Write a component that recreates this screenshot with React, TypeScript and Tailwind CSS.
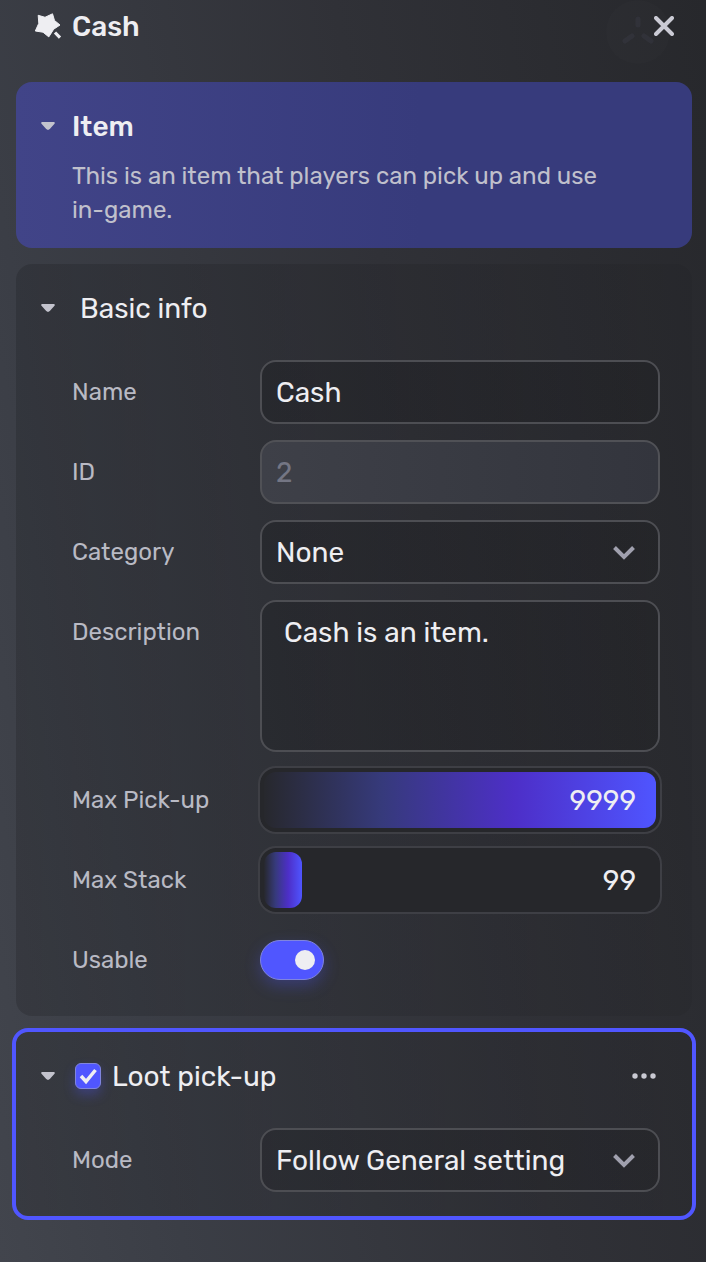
import { useState, type ReactNode } from "react";

const fieldClass =
  "w-full rounded-2xl border-2 border-[#4d4e53] bg-linear-to-r from-black/15 to-black/10 text-[28px] text-[#eeeef2] outline-none";

function Caret({ label }: { label: string }) {
  return (
    <button type="button" aria-label={label} className="mr-4 flex h-8 w-4 items-center justify-center">
      <svg viewBox="0 0 16 10" className="h-2.5 w-4 fill-[#c3c3cd]">
        <path d="M2.2 1h11.6c1 0 1.4 1 .7 1.7L9.8 8.1c-1 1.1-2.6 1.1-3.600 0L1.500 2.700C.8 2 1.200 1 2.200 1z" />
      </svg>
    </button>
  );
}

interface RowProps {
  label: string;
  htmlFor: string;
  children: ReactNode;
}

function Row({ label, htmlFor, children }: RowProps) {
  return (
    <div className="grid grid-cols-[188px_1fr] items-start">
      <label htmlFor={htmlFor} className="flex h-16 items-center text-2xl text-[#b9bac4]">
        {label}
      </label>
      {children}
    </div>
  );
}

function SelectField({ id, options }: { id: string; options: string[] }) {
  return (
    <div className="relative">
      <select id={id} className={`${fieldClass} h-16 appearance-none pl-3.5 pr-16 pt-0.5`}>
        {options.map((option) => (
          <option key={option}>{option}</option>
        ))}
      </select>
      <svg
        viewBox="0 0 24 16"
        className="pointer-events-none absolute right-6 top-6 h-4 w-6 fill-none stroke-[#a0a0ae] stroke-4"
      >
        <path d="M2.500 3.500L12 13l9.500-9.500" />
      </svg>
    </div>
  );
}

interface SliderFieldProps {
  id: string;
  max: number;
  initial: number;
}

function SliderField({ id, max, initial }: SliderFieldProps) {
  const [value, setValue] = useState(initial);
  const percent = Math.max(9.6, (value / max) * 100);

  return (
    <div className="relative h-16 rounded-2xl bg-[#26272b] p-1 outline-2 outline-[#3e3f45]">
      {/* Filled part of the track */}
      <div
        className="h-full rounded-xl bg-[linear-gradient(to_right,#27282d,#363a7b_30%,#4d2fc8_64%,#4f55ff)]"
        style={{ width: `${percent}%` }}
      />
      <output
        htmlFor={id}
        className="absolute inset-y-0 right-6 flex items-center pt-0.5 text-[28px] text-[#eeeef2]"
      >
        {value}
      </output>
      <input
        id={id}
        type="range"
        min={0}
        max={max}
        value={value}
        onChange={(e) => setValue(Number(e.target.value))}
        className="absolute inset-0 h-full w-full cursor-pointer opacity-0"
      />
    </div>
  );
}

export default function App() {
  const [usable, setUsable] = useState(true);
  const [lootEnabled, setLootEnabled] = useState(true);

  return (
    <main className="relative min-h-screen bg-linear-[80deg,#42454d,#3b3e46_20%,#303137_60%,#27282c] pb-11 pl-4 pr-3.5 font-['Rubik','Roboto',sans-serif]">
      {/* Faint emblem behind the close button */}
      <svg viewBox="0 0 64 64" className="absolute right-9 top-0 size-16 fill-none">
        <circle cx="32" cy="32" r="32" className="fill-white/1" />
        <path
          d="M32 19v6M26 36l-7 5M38 36l7 5"
          strokeWidth="5"
          strokeLinecap="round"
          className="stroke-[#8080a0]/8"
        />
      </svg>

      {/* Header */}
      <header className="relative flex items-start pb-[38px] pl-4 pr-[18px] pt-2.5">
        <svg viewBox="0 0 32 32" className="mr-2 size-8 fill-[#eeeef2] stroke-[#eeeef2]">
          <path
            d="M6.200 5.300L13 7.300l7.500-3.500 2 6.700 5.500 4.500-6.300 4.200-4.900 7.700-5.800-4.700-7.700-1.200 3.500-7.700z"
            strokeWidth="1"
            strokeLinejoin="round"
          />
          <path d="M23 22.500l5 5.200" strokeWidth="3.200" />
        </svg>
        <h1 className="flex-1 text-[28px] font-medium leading-[34px] text-[#eeeef2]">Cash</h1>
        <button type="button" aria-label="Close" className="flex h-8 w-5 items-center justify-center">
          <svg viewBox="0 0 20 20" className="size-5 fill-none stroke-[#cbcbd5] stroke-4">
            <path d="M2 2l16 16M18 2L2 18" strokeLinecap="round" />
          </svg>
        </button>
      </header>

      <div className="relative flex flex-col gap-4">
        {/* Item */}
        <section className="rounded-2xl bg-linear-to-r from-[#414488] to-[#373b7c] to-60% px-6 pb-[21px] pt-7">
          <div className="flex items-start">
            <Caret label="Collapse item" />
            <h2 className="text-[28px] font-medium leading-[34px] text-[#eeeef2]">Item</h2>
          </div>
          <p className="mt-[15px] max-w-[580px] pl-8 text-2xl leading-[34px] text-[#c0c0cc]">
            This is an item that players can pick up and use in-game.
          </p>
        </section>

        {/* Basic info */}
        <section className="rounded-2xl bg-linear-to-r from-black/15 to-black/5 pb-6 pl-6 pr-8 pt-7">
          <div className="flex items-start">
            <Caret label="Collapse basic info" />
            <h2 className="pl-2 text-[28px] leading-[34px] text-[#eeeef2]">Basic info</h2>
          </div>
          <div className="mt-[34px] flex flex-col gap-4 pl-8">
            <Row label="Name" htmlFor="name">
              <input id="name" defaultValue="Cash" className={`${fieldClass} h-16 px-3.5`} />
            </Row>
            <Row label="ID" htmlFor="item-id">
              <input
                id="item-id"
                defaultValue="2"
                disabled
                className="h-16 w-full rounded-2xl border-2 border-[#505156] bg-linear-to-r from-[#3e4048] to-[#33353d] px-3.5 text-[28px] text-[#747684]"
              />
            </Row>
            <Row label="Category" htmlFor="category">
              <SelectField id="category" options={["None"]} />
            </Row>
            <Row label="Description" htmlFor="description">
              <textarea
                id="description"
                defaultValue="Cash is an item."
                className={`${fieldClass} block h-38 resize-none px-[22px] py-3.5 leading-[34px]`}
              />
            </Row>
            <Row label="Max Pick-up" htmlFor="max-pickup">
              <SliderField id="max-pickup" max={9999} initial={9999} />
            </Row>
            <Row label="Max Stack" htmlFor="max-stack">
              <SliderField id="max-stack" max={9999} initial={99} />
            </Row>
            <Row label="Usable" htmlFor="usable">
              <div className="flex h-16 items-center">
                <span className="relative h-10 w-16">
                  <input
                    id="usable"
                    type="checkbox"
                    role="switch"
                    checked={usable}
                    onChange={() => setUsable(!usable)}
                    className="peer block h-10 w-16 appearance-none rounded-full border border-[#8085dd] bg-[#5056ff] shadow-[0_6px_16px_rgba(80,86,255,0.3)]"
                  />
                  <span className="pointer-events-none absolute left-2.5 top-2.5 size-5 rounded-full bg-[#eeeef2] peer-checked:left-[35px]" />
                </span>
              </div>
            </Row>
          </div>
        </section>

        {/* Loot pick-up */}
        <section className="rounded-xl bg-linear-to-r from-black/15 to-black/5 pb-6 pl-6 pr-8 pt-7 outline-4 outline-[#5056ff]">
          <div className="flex items-start">
            <Caret label="Collapse loot pick-up" />
            <span className="relative ml-[3px] mt-[3px] size-[26px]">
              <input
                id="loot"
                type="checkbox"
                checked={lootEnabled}
                onChange={() => setLootEnabled(!lootEnabled)}
                className="peer block size-[26px] appearance-none rounded-md border border-[#8085dd] bg-[#5056ff] shadow-[0_6px_12px_rgba(80,86,255,0.3)]"
              />
              <svg
                viewBox="0 0 26 26"
                className="pointer-events-none absolute inset-0 hidden fill-none stroke-[#eeeef2] stroke-[3.5] peer-checked:block"
              >
                <path d="M6 13l5 5.500L20.500 7" />
              </svg>
            </span>
            <label htmlFor="loot" className="flex-1 pl-[11px] text-[28px] leading-[34px] text-[#eeeef2]">
              Loot pick-up
            </label>
            <button type="button" aria-label="More options" className="mr-1 flex h-8 w-6 items-center">
              <svg viewBox="0 0 24 8" className="h-2 w-6 fill-[#c9c9d2]">
                <circle cx="3" cy="4" r="2.700" />
                <circle cx="12" cy="4" r="2.700" />
                <circle cx="21" cy="4" r="2.700" />
              </svg>
            </button>
          </div>
          <div className="mt-[34px] pl-8">
            <Row label="Mode" htmlFor="mode">
              <SelectField id="mode" options={["Follow General setting"]} />
            </Row>
          </div>
        </section>
      </div>
    </main>
  );
}
